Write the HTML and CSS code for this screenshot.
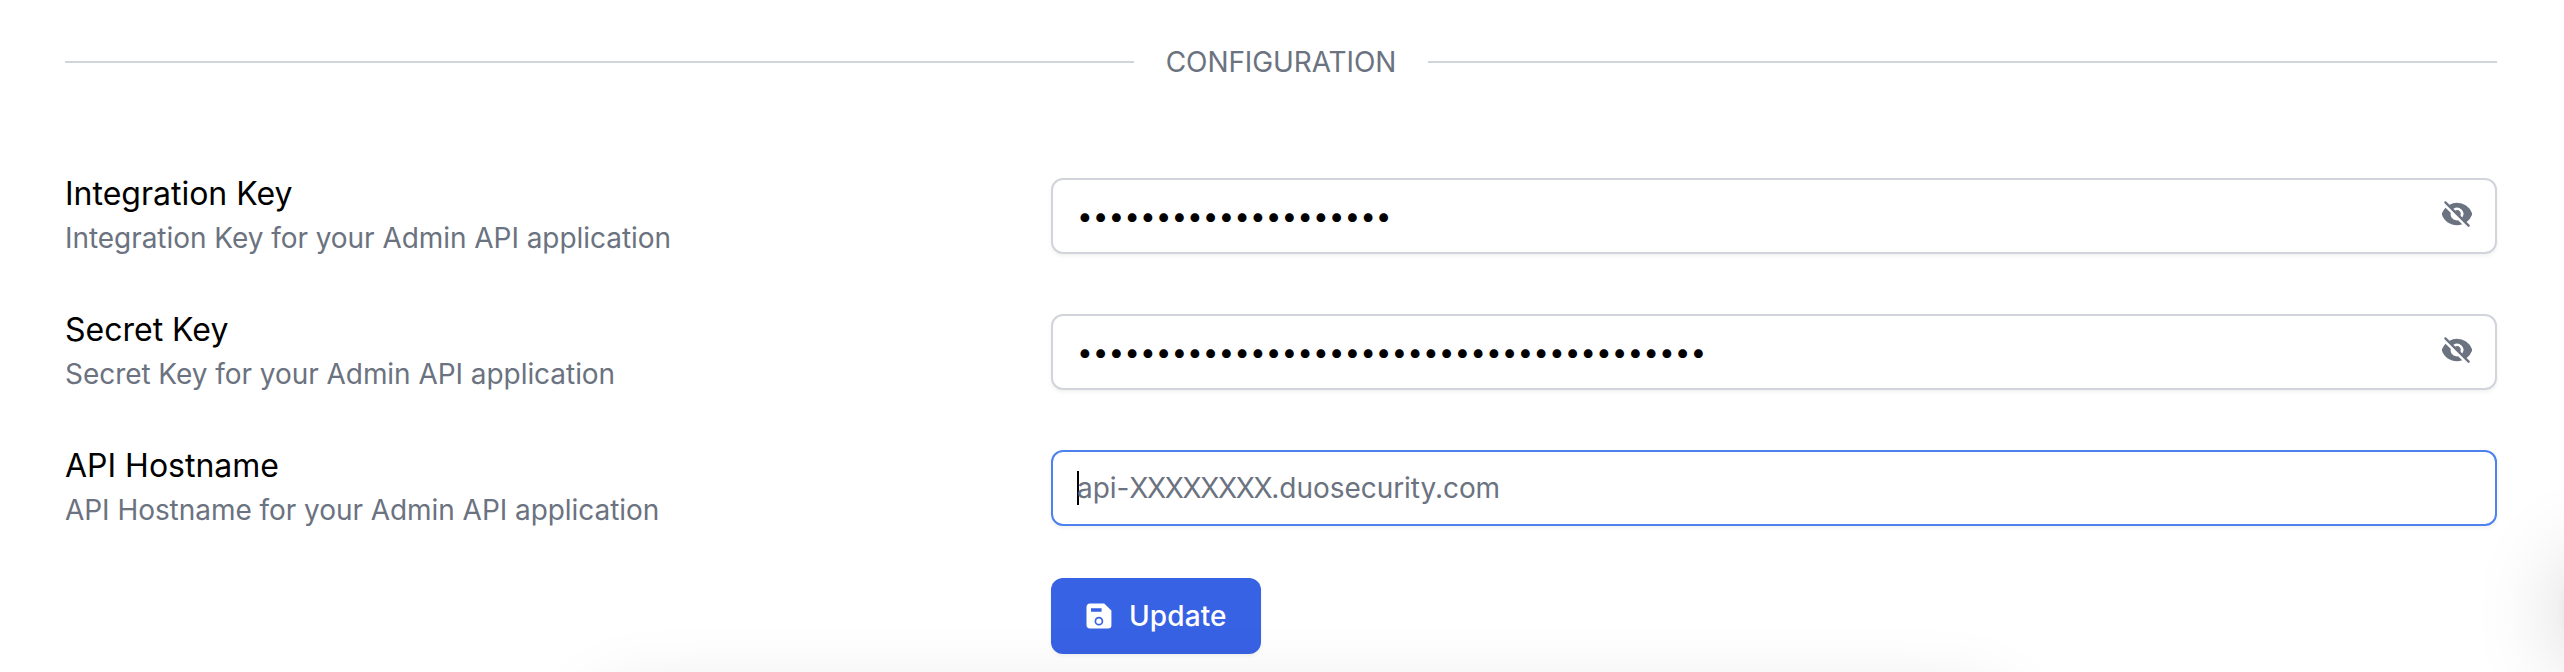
FILE: index.html
```html
<!DOCTYPE html>
<html lang="en">
<head>
<meta charset="utf-8">
<title>Configuration</title>
<link rel="stylesheet" href="styles.css">
</head>
<body>
<div class="screen">
<main class="page">
  <div class="divider"><span class="divider-text">CONFIGURATION</span></div>
  <form class="form">
    <div class="row">
      <div class="label">
        <div class="label-title">Integration Key</div>
        <div class="label-help">Integration Key for your Admin API application</div>
      </div>
      <div class="field">
        <span class="dots">••••••••••••••••••••</span>
        <svg class="eye" viewBox="0 0 20 20" fill="currentColor"><path fill-rule="evenodd" d="M3.28 2.22a.75.75 0 00-1.06 1.06l14.5 14.5a.75.75 0 101.06-1.06l-1.745-1.745a10.029 10.029 0 003.3-4.38 1.651 1.651 0 000-1.185A10.004 10.004 0 009.999 3a9.956 9.956 0 00-4.744 1.194L3.28 2.22zM7.752 6.69l1.092 1.092a2.5 2.5 0 013.374 3.373l1.091 1.092a4 4 0 00-5.557-5.557z"/><path d="M10.748 13.93l2.523 2.523a9.987 9.987 0 01-3.27.547c-4.258 0-7.894-2.66-9.337-6.41a1.651 1.651 0 010-1.186A10.007 10.007 0 012.839 6.02L6.07 9.252a4 4 0 004.678 4.678z"/></svg>
      </div>
    </div>
    <div class="row">
      <div class="label">
        <div class="label-title">Secret Key</div>
        <div class="label-help">Secret Key for your Admin API application</div>
      </div>
      <div class="field">
        <span class="dots">••••••••••••••••••••••••••••••••••••••••</span>
        <svg class="eye" viewBox="0 0 20 20" fill="currentColor"><path fill-rule="evenodd" d="M3.28 2.22a.75.75 0 00-1.06 1.06l14.5 14.5a.75.75 0 101.06-1.06l-1.745-1.745a10.029 10.029 0 003.3-4.38 1.651 1.651 0 000-1.185A10.004 10.004 0 009.999 3a9.956 9.956 0 00-4.744 1.194L3.28 2.22zM7.752 6.69l1.092 1.092a2.5 2.5 0 013.374 3.373l1.091 1.092a4 4 0 00-5.557-5.557z"/><path d="M10.748 13.93l2.523 2.523a9.987 9.987 0 01-3.27.547c-4.258 0-7.894-2.66-9.337-6.41a1.651 1.651 0 010-1.186A10.007 10.007 0 012.839 6.02L6.07 9.252a4 4 0 004.678 4.678z"/></svg>
      </div>
    </div>
    <div class="row">
      <div class="label">
        <div class="label-title">API Hostname</div>
        <div class="label-help">API Hostname for your Admin API application</div>
      </div>
      <div class="field field-focus">
        <span class="caret"></span>
        <span class="placeholder">api-<span class="mask">XXXXXXXX</span>.duosecurity.com</span>
      </div>
    </div>
    <div class="actions">
      <button class="button" type="button">
        <svg class="save" viewBox="0 0 26 26"><path fill="#fff" fill-rule="evenodd" d="M4 0.4H18.2L25.4 7.4V22a3.4 3.4 0 0 1-3.4 3.6H4A3.4 3.4 0 0 1 .5 22V4A3.4 3.4 0 0 1 4 .4zM5 5.2v3.6h10.6V5.2z"/><circle cx="12.9" cy="18.2" r="3.5" fill="none" stroke="#3862e4" stroke-width="1.7"/></svg>
        <span class="button-text">Update</span>
      </button>
    </div>
  </form>
</main>
<div class="panel-shadow"></div>
<div class="launcher-shadow"></div>
</div>
</body>
</html>
```
FILE: styles.css
```css
* { box-sizing: border-box; }
body {
  margin: 0;
  background: #fff;
  font-family: Inter, "Liberation Sans", sans-serif;
  color: #000;
}
.screen { position: relative; height: 672px; overflow: hidden; }
.page { padding: 42px 67px 0 65px; }
.divider {
  display: flex;
  align-items: center;
  gap: 32px;
  height: 40px;
  color: #6b7280;
  font-size: 28px;
  line-height: 40px;
  letter-spacing: -0.1px;
}
.divider::before, .divider::after {
  content: "";
  flex: 1;
  height: 2px;
  background: #d1d5db;
}
.form { display: flex; flex-direction: column; padding-top: 96px; }
.row {
  display: grid;
  grid-template-columns: 986px 1fr;
  height: 136px;
  align-items: start;
}
.label { margin-top: -8px; white-space: nowrap; }
.label-title { font-size: 32px; line-height: 48px; }
.label-help { font-size: 28px; line-height: 40px; letter-spacing: -0.05px; color: #6b7280; }
.field {
  height: 76px;
  display: flex;
  align-items: center;
  padding: 0 22px 0 24px;
  border: 2px solid #d1d5db;
  border-radius: 12px;
  background: #fff;
  box-shadow: 0 2px 4px rgba(0, 0, 0, 0.06);
  font-size: 28px;
  line-height: 40px;
}
.field-focus { border-color: #4d82ee; }
.dots { flex: 1; white-space: nowrap; letter-spacing: -0.02px; }
.eye { width: 32px; height: 32px; margin-bottom: 4px; color: #6b7280; }
.caret { width: 2px; height: 34px; margin-right: -2px; background: #000; }
.placeholder { color: #6b7280; letter-spacing: -0.05px; }
.mask { letter-spacing: -1.35px; }
.actions { display: flex; margin-left: 986px; margin-top: -8px; }
.button {
  display: flex;
  align-items: center;
  gap: 17px;
  width: 210px;
  height: 76px;
  padding: 0 0 0 35px;
  border: 0;
  border-radius: 12px;
  background: #3862e4;
  box-shadow: 0 2px 4px rgba(0, 0, 0, 0.06);
  color: #fff;
  font-family: inherit;
  font-size: 28px;
  font-weight: 500;
  line-height: 40px;
}
.button-text { letter-spacing: 0.1px; }
.save { width: 26px; height: 26px; }
.panel-shadow {
  position: absolute;
  left: 600px;
  top: 704px;
  width: 1400px;
  height: 200px;
  border-radius: 24px;
  box-shadow: 0 0 80px rgba(0, 0, 0, 0.15);
}
.launcher-shadow {
  position: absolute;
  left: 2566px;
  top: 560px;
  width: 96px;
  height: 96px;
  border-radius: 50%;
  box-shadow: 0 2px 12px rgba(0, 0, 0, 0.06), 0 4px 96px rgba(0, 0, 0, 0.24);
}
```
